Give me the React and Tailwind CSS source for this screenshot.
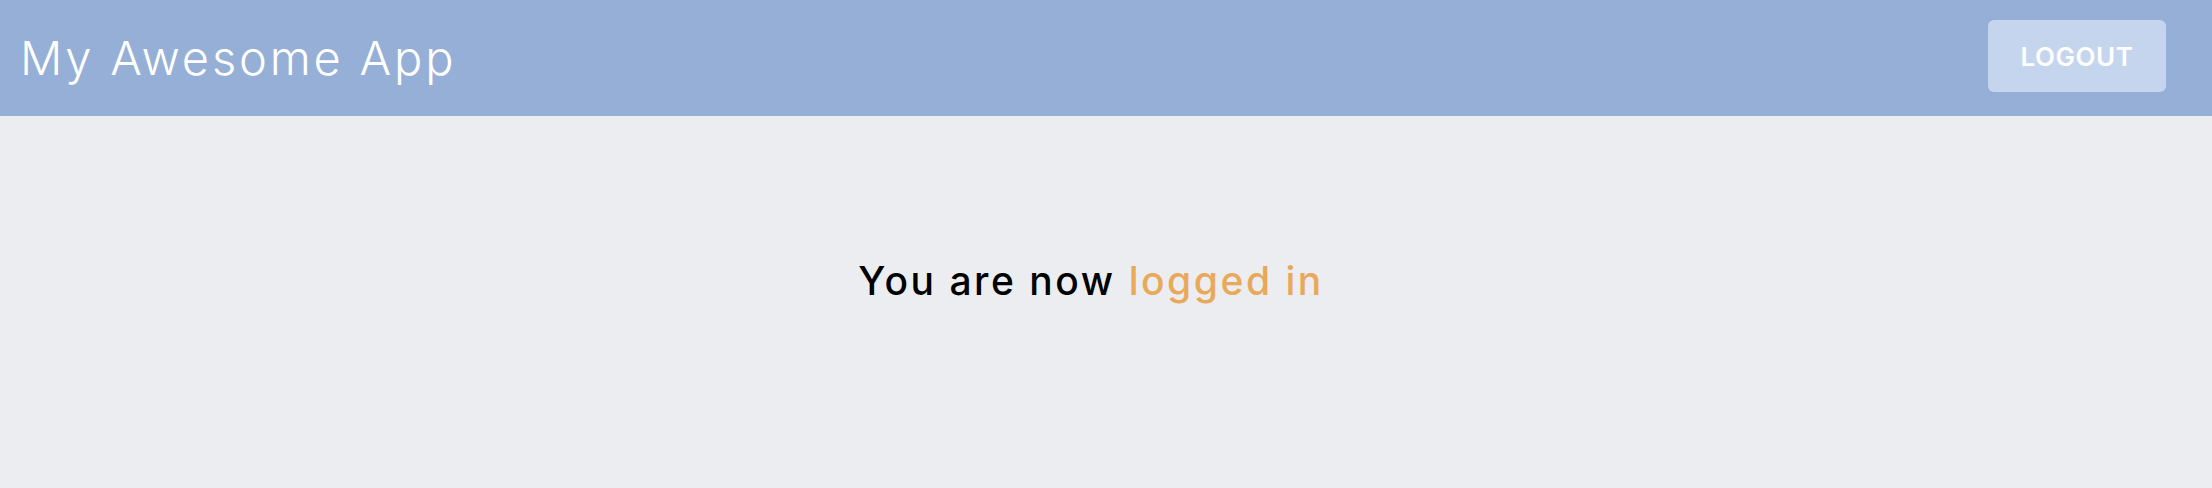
export default function App() {
  return (
    <div className="min-h-screen w-full bg-[#ecedf1]" style={{ fontFamily: "Inter, 'Open Sans', sans-serif" }}>
      <header className="flex h-[116px] items-start justify-between bg-[#95afd7] pl-[20px] pr-[46px]">
        <h1 className="mt-[34px] text-[47px] font-light leading-none tracking-[0.06em] text-white">My Awesome App</h1>
        <button className="mt-[20px] flex h-[72px] w-[178px] items-center justify-center rounded-[6px] bg-[#c5d5ee] text-[26px] font-semibold tracking-[0.02em] text-white">
          LOGOUT
        </button>
      </header>
      <main className="flex justify-center pr-[30px] pt-[136px]">
        <p className="text-[39px] font-medium tracking-[0.065em] text-black">
          You are now <span className="text-[#e9a95a]">logged in</span>
        </p>
      </main>
    </div>
  );
}
